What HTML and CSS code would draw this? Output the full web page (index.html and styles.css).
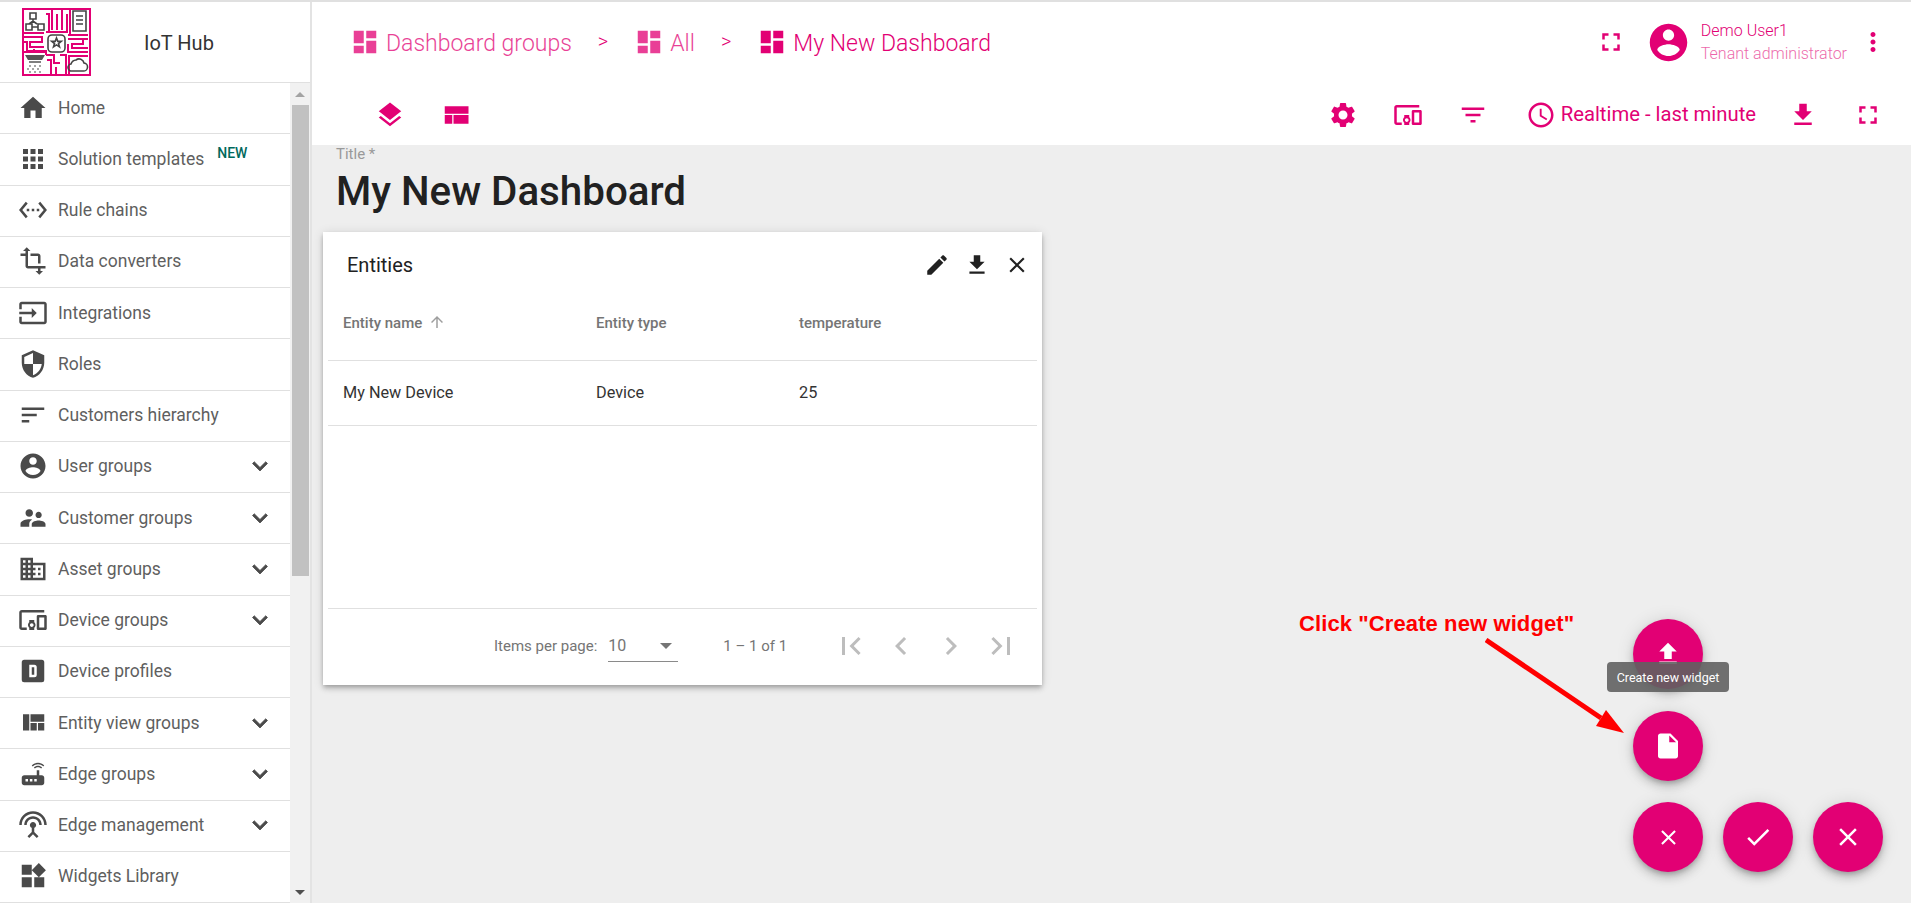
FILE: index.html
```html
<!DOCTYPE html>
<html lang="en">
<head>
    <meta charset="UTF-8">
    <title>My New Dashboard</title>
    <link rel="stylesheet" href="styles.css">
</head>
<body>
    <svg class="sprite" xmlns="http://www.w3.org/2000/svg">
        <symbol id="i-home" viewBox="0 0 24 24"><path d="M10 20v-6h4v6h5v-8h3L12 3 2 12h3v8z"/></symbol>
        <symbol id="i-apps" viewBox="0 0 24 24"><path d="M4 8h4V4H4v4zm6 12h4v-4h-4v4zm-6 0h4v-4H4v4zm0-6h4v-4H4v4zm6 0h4v-4h-4v4zm6-10v4h4V4h-4zm-6 4h4V4h-4v4zm6 6h4v-4h-4v4zm0 6h4v-4h-4v4z"/></symbol>
        <symbol id="i-ethernet" viewBox="0 0 24 24"><path d="M7.77 6.76L6.23 5.48.82 12l5.41 6.52 1.54-1.28L3.42 12l4.35-5.24zM7 13h2v-2H7v2zm10-2h-2v2h2v-2zm-6 2h2v-2h-2v2zm6.77-7.52l-1.54 1.28L20.58 12l-4.35 5.24 1.54 1.28L23.18 12l-5.41-6.52z"/></symbol>
        <symbol id="i-transform" viewBox="0 0 24 24"><path d="M22 18v-2H8V4h2L7 1 4 4h2v2H2v2h4v8c0 1.1.9 2 2 2h8v2h-2l3 3 3-3h-2v-2h4zM10 8h6v6h2V8c0-1.1-.9-2-2-2h-6v2z"/></symbol>
        <symbol id="i-input" viewBox="0 0 24 24"><path d="M21 3.01H3c-1.1 0-2 .9-2 2V9h2V4.99h18v14.03H3V15H1v4.01c0 1.1.9 1.98 2 1.98h18c1.1 0 2-.88 2-1.98v-14c0-1.11-.9-2-2-2zM11 16l4-4-4-4v3H1v2h10v3z"/></symbol>
        <symbol id="i-security" viewBox="0 0 24 24"><path d="M12 1L3 5v6c0 5.55 3.84 10.74 9 12 5.16-1.26 9-6.45 9-12V5l-9-4zm0 10.99h7c-.53 4.12-3.28 7.79-7 8.94V12H5V6.3l7-3.11v8.8z"/></symbol>
        <symbol id="i-sort" viewBox="0 0 24 24"><path d="M3 18h6v-2H3v2zM3 6v2h18V6H3zm0 7h12v-2H3v2z"/></symbol>
        <symbol id="i-account" viewBox="0 0 24 24"><path d="M12 2C6.48 2 2 6.48 2 12s4.48 10 10 10 10-4.48 10-10S17.52 2 12 2zm0 3c1.66 0 3 1.34 3 3s-1.34 3-3 3-3-1.34-3-3 1.34-3 3-3zm0 14.2c-2.5 0-4.71-1.28-6-3.22.03-1.99 4-3.08 6-3.08 1.99 0 5.97 1.09 6 3.08-1.29 1.94-3.5 3.22-6 3.22z"/></symbol>
        <symbol id="i-supervisor" viewBox="0 0 24 24"><path d="M16.5 12c1.38 0 2.49-1.12 2.49-2.5S17.88 7 16.5 7C15.12 7 14 8.12 14 9.5s1.12 2.5 2.5 2.5zM9 11c1.66 0 2.99-1.34 2.99-3S10.66 5 9 5C7.34 5 6 6.34 6 8s1.34 3 3 3zm7.5 3c-1.83 0-5.5.92-5.5 2.75V19h11v-2.25c0-1.83-3.67-2.75-5.5-2.75zM9 13c-2.33 0-7 1.17-7 3.5V19h7v-2.25c0-.85.33-2.34 2.37-3.47C10.5 13.1 9.66 13 9 13z"/></symbol>
        <symbol id="i-domain" viewBox="0 0 24 24"><path d="M12 7V3H2v18h20V7H12zM6 19H4v-2h2v2zm0-4H4v-2h2v2zm0-4H4V9h2v2zm0-4H4V5h2v2zm4 12H8v-2h2v2zm0-4H8v-2h2v2zm0-4H8V9h2v2zm0-4H8V5h2v2zm10 12h-8v-2h2v-2h-2v-2h2v-2h-2V9h8v10zm-2-8h-2v2h2v-2zm0 4h-2v2h2v-2z"/></symbol>
        <symbol id="i-devices" viewBox="0 0 24 24"><path d="M3 6h18V4H3c-1.1 0-2 .9-2 2v12c0 1.1.9 2 2 2h4v-2H3V6zm10 6H9v1.78c-.61.55-1 1.33-1 2.22s.39 1.67 1 2.22V20h4v-1.78c.61-.55 1-1.34 1-2.22s-.39-1.67-1-2.22V12zm-2 5.5c-.83 0-1.5-.67-1.5-1.5s.67-1.5 1.5-1.5 1.5.67 1.5 1.5-.67 1.5-1.5 1.5zM22 8h-6c-.5 0-1 .5-1 1v10c0 .5.5 1 1 1h6c.5 0 1-.5 1-1V9c0-.5-.5-1-1-1zm-1 10h-4v-8h4v8z"/></symbol>
        <symbol id="i-dbox" viewBox="0 0 24 24"><path fill-rule="evenodd" d="M5 3h14a2 2 0 012 2v14a2 2 0 01-2 2H5a2 2 0 01-2-2V5a2 2 0 012-2zm4 4v10h4a2 2 0 002-2V9a2 2 0 00-2-2H9zm2 2h2v6h-2V9z"/></symbol>
        <symbol id="i-quilt" viewBox="0 0 24 24"><path d="M10 18h5v-6h-5v6zm-6 0h5V5H4v13zm12 0h5v-6h-5v6zM10 5v6h11V5H10z"/></symbol>
        <symbol id="i-router" viewBox="0 0 24 24"><path d="M20.2 5.9l.8-.8C19.6 3.7 17.8 3 16 3s-3.6.7-5 2.1l.8.8C13 4.8 14.5 4.2 16 4.2s3 .6 4.2 1.7zm-.9.8c-.9-.9-2.1-1.4-3.3-1.4s-2.4.5-3.3 1.4l.8.8c.7-.7 1.6-1 2.5-1 .9 0 1.8.3 2.5 1l.8-.8zM19 13h-2V9h-2v4H5c-1.1 0-2 .9-2 2v4c0 1.1.9 2 2 2h14c1.1 0 2-.9 2-2v-4c0-1.1-.9-2-2-2zM8 18H6v-2h2v2zm3.5 0h-2v-2h2v2zm3.5 0h-2v-2h2v2z"/></symbol>
        <symbol id="i-antenna" viewBox="0 0 24 24"><path d="M12 5c-3.87 0-7 3.13-7 7h2c0-2.76 2.24-5 5-5s5 2.24 5 5h2c0-3.87-3.13-7-7-7zm1 9.29c.88-.39 1.5-1.26 1.5-2.29 0-1.38-1.12-2.5-2.5-2.5S9.5 10.62 9.5 12c0 1.02.62 1.9 1.5 2.29v3.3L7.59 21 9 22.41l3-3 3 3L16.41 21 13 17.59v-3.3zM12 1C5.93 1 1 5.93 1 12h2c0-4.97 4.03-9 9-9s9 4.03 9 9h2c0-6.07-4.93-11-11-11z"/></symbol>
        <symbol id="i-widgets" viewBox="0 0 24 24"><path d="M13 13v8h8v-8h-8zM3 21h8v-8H3v8zM3 3v8h8V3H3zm13.66-1.31L11 7.34 16.66 13l5.66-5.66-5.66-5.65z"/></symbol>
        <symbol id="i-expand" viewBox="0 0 24 24"><path d="M16.59 8.59L12 13.17 7.41 8.59 6 10l6 6 6-6z"/></symbol>
        <symbol id="i-dashboard" viewBox="0 0 24 24"><path d="M3 13h8V3H3v10zm0 8h8v-6H3v6zm10 0h8V11h-8v10zm0-18v6h8V3h-8z"/></symbol>
        <symbol id="i-layers" viewBox="0 0 24 24"><path d="M11.99 18.54l-7.37-5.73L3 14.07l9 7 9-7-1.63-1.27-7.38 5.74zM12 16l7.36-5.73L21 9l-9-7-9 7 1.63 1.27L12 16z"/></symbol>
        <symbol id="i-compact" viewBox="0 0 24 24"><path d="M3 19h6v-7H3v7zm7 0h12v-7H10v7zM3 5v6h19V5H3z"/></symbol>
        <symbol id="i-fullscreen" viewBox="0 0 24 24"><path d="M7 14H5v5h5v-2H7v-3zm-2-4h2V7h3V5H5v5zm12 7h-3v2h5v-5h-2v3zM14 5v2h3v3h2V5h-5z"/></symbol>
        <symbol id="i-more" viewBox="0 0 24 24"><path d="M12 8c1.1 0 2-.9 2-2s-.9-2-2-2-2 .9-2 2 .9 2 2 2zm0 2c-1.1 0-2 .9-2 2s.9 2 2 2 2-.9 2-2-.9-2-2-2zm0 6c-1.1 0-2 .9-2 2s.9 2 2 2 2-.9 2-2-.9-2-2-2z"/></symbol>
        <symbol id="i-settings" viewBox="0 0 24 24"><path d="M19.14 12.94c.04-.3.06-.61.06-.94 0-.32-.02-.64-.07-.94l2.03-1.58c.18-.14.23-.41.12-.61l-1.92-3.32c-.12-.22-.37-.29-.59-.22l-2.39.96c-.5-.38-1.03-.7-1.62-.94l-.36-2.54c-.04-.24-.24-.41-.48-.41h-3.84c-.24 0-.43.17-.47.41l-.36 2.54c-.59.24-1.13.57-1.62.94l-2.39-.96c-.22-.08-.47 0-.59.22L2.74 8.87c-.12.21-.08.47.12.61l2.03 1.58c-.05.3-.09.63-.09.94s.02.64.07.94l-2.03 1.58c-.18.14-.23.41-.12.61l1.92 3.32c.12.22.37.29.59.22l2.39-.96c.5.38 1.03.7 1.62.94l.36 2.54c.05.24.24.41.48.41h3.84c.24 0 .44-.17.47-.41l.36-2.54c.59-.24 1.13-.56 1.62-.94l2.39.96c.22.08.47 0 .59-.22l1.92-3.32c.12-.22.07-.47-.12-.61l-2.01-1.58zM12 15.6c-1.98 0-3.6-1.62-3.6-3.6s1.62-3.6 3.6-3.6 3.6 1.62 3.6 3.6-1.62 3.6-3.6 3.6z"/></symbol>
        <symbol id="i-filter" viewBox="0 0 24 24"><path d="M10 18h4v-2h-4v2zM3 6v2h18V6H3zm3 7h12v-2H6v2z"/></symbol>
        <symbol id="i-schedule" viewBox="0 0 24 24"><path d="M11.99 2C6.47 2 2 6.48 2 12s4.47 10 9.99 10C17.52 22 22 17.52 22 12S17.52 2 11.99 2zM12 20c-4.42 0-8-3.58-8-8s3.58-8 8-8 8 3.58 8 8-3.58 8-8 8zm.5-13H11v6l5.25 3.15.75-1.23-4.5-2.67z"/></symbol>
        <symbol id="i-download" viewBox="0 0 24 24"><path d="M19 9h-4V3H9v6H5l7 7 7-7zM5 18v2h14v-2H5z"/></symbol>
        <symbol id="i-upload" viewBox="0 0 24 24"><path d="M9 16h6v-6h4l-7-7-7 7h4v6zm-4 2h14v2H5z"/></symbol>
        <symbol id="i-edit" viewBox="0 0 24 24"><path d="M3 17.25V21h3.75L17.81 9.94l-3.75-3.75L3 17.25zM20.71 7.04c.39-.39.39-1.02 0-1.41l-2.34-2.34c-.39-.39-1.02-.39-1.41 0l-1.83 1.83 3.75 3.75 1.83-1.83z"/></symbol>
        <symbol id="i-close" viewBox="0 0 24 24"><path d="M19 6.41L17.59 5 12 10.59 6.41 5 5 6.41 10.59 12 5 17.59 6.41 19 12 13.41 17.59 19 19 17.59 13.41 12z"/></symbol>
        <symbol id="i-arrow-up" viewBox="0 0 24 24"><path d="M4 12l1.41 1.41L11 7.83V20h2V7.83l5.58 5.59L20 12l-8-8-8 8z"/></symbol>
        <symbol id="i-first" viewBox="0 0 24 24"><path d="M18.41 16.59L13.82 12l4.59-4.59L17 6l-6 6 6 6zM6 6h2v12H6z"/></symbol>
        <symbol id="i-prev" viewBox="0 0 24 24"><path d="M15.41 7.41L14 6l-6 6 6 6 1.41-1.41L10.83 12z"/></symbol>
        <symbol id="i-next" viewBox="0 0 24 24"><path d="M10 6L8.59 7.41 13.17 12l-4.58 4.59L10 18l6-6z"/></symbol>
        <symbol id="i-last" viewBox="0 0 24 24"><path d="M5.59 7.41L10.18 12l-4.59 4.59L7 18l6-6-6-6zM16 6h2v12h-2z"/></symbol>
        <symbol id="i-file" viewBox="0 0 24 24"><path d="M6 2c-1.1 0-1.99.9-1.99 2L4 20c0 1.1.89 2 1.99 2H18c1.1 0 2-.9 2-2V8l-6-6H6zm7 7V3.5L18.5 9H13z"/></symbol>
        <symbol id="i-check" viewBox="0 0 24 24"><path d="M9 16.17L4.83 12l-1.42 1.41L9 19 21 7l-1.41-1.41z"/></symbol>
    </svg>

    <div class="app">
        <aside class="sidenav">
            <div class="brand">
                <svg class="logo" viewBox="0 0 69 68">
                    <rect width="69" height="68" fill="#fff"/>
                    <rect x="1" y="1" width="67" height="66" fill="none" stroke="#e20074" stroke-width="2"/>
                    <g fill="none" stroke="#e20074" stroke-width="2">
                        <path d="M24 6h3v18M30 2v20M35 6v16M40 2v20M45 6v18M48 2v24M24 24h22"/>
                        <path d="M2 25h20M2 29h18v5H8v5h14M2 34h3v9h20M12 43v-2"/>
                        <path d="M46 27h20M46 31h15v5H50v4h16M46 36v8h20M62 31h4"/>
                        <path d="M2 44h22M24 47h8v8h6M25 52h4v14M34 59v8M38 47h6v20M24 44v3"/>
                        <path d="M46 48h20M47 48v18"/>
                    </g>
                    <g fill="none" stroke="#444" stroke-width="1.600">
                        <path d="M8 5h6v6H8zM4 16h6v6H4zM16 16h6v6h-6zM11 11v2M7 16l4-3 4 3M10 19h6"/>
                        <path d="M51 3h13v20H51zM54 8h7M54 12h7M54 16h7"/>
                        <rect x="26" y="27" width="17" height="17" rx="4"/>
                        <path d="M34.500 30l1.300 3.400h3.400l-2.700 2.100 1 3.400-3-2-3 2 1-3.400-2.700-2.100h3.400z"/>
                        <path d="M50 63h11a4 4 0 001-8 5 5 0 00-8-3 6 6 0 00-5 4 3.500 3.500 0 001 7z"/>
                    </g>
                    <path d="M3 47h20l-3 5H6z" fill="#555"/>
                    <path d="M7 54h12" stroke="#555" stroke-width="1.500"/>
                    <path d="M7 58h2M12 58h2M17 58h2M5 61h2M10 61h2M15 61h2M7 64h2M12 64h2M17 64h2" stroke="#888" stroke-width="1.500"/>
                </svg>
                <span class="brand-name">IoT Hub</span>
            </div>
            <div class="menu-wrap">
                <nav class="menu">
                    <a class="menu-row"><svg class="menu-icon"><use href="#i-home"/></svg><span class="menu-label">Home</span></a>
                    <a class="menu-row"><svg class="menu-icon"><use href="#i-apps"/></svg><span class="menu-label">Solution templates</span><span class="new-tag">NEW</span></a>
                    <a class="menu-row"><svg class="menu-icon"><use href="#i-ethernet"/></svg><span class="menu-label">Rule chains</span></a>
                    <a class="menu-row"><svg class="menu-icon"><use href="#i-transform"/></svg><span class="menu-label">Data converters</span></a>
                    <a class="menu-row"><svg class="menu-icon"><use href="#i-input"/></svg><span class="menu-label">Integrations</span></a>
                    <a class="menu-row"><svg class="menu-icon"><use href="#i-security"/></svg><span class="menu-label">Roles</span></a>
                    <a class="menu-row"><svg class="menu-icon"><use href="#i-sort"/></svg><span class="menu-label">Customers hierarchy</span></a>
                    <a class="menu-row"><svg class="menu-icon"><use href="#i-account"/></svg><span class="menu-label">User groups</span><svg class="menu-chevron"><use href="#i-expand"/></svg></a>
                    <a class="menu-row"><svg class="menu-icon"><use href="#i-supervisor"/></svg><span class="menu-label">Customer groups</span><svg class="menu-chevron"><use href="#i-expand"/></svg></a>
                    <a class="menu-row"><svg class="menu-icon"><use href="#i-domain"/></svg><span class="menu-label">Asset groups</span><svg class="menu-chevron"><use href="#i-expand"/></svg></a>
                    <a class="menu-row"><svg class="menu-icon"><use href="#i-devices"/></svg><span class="menu-label">Device groups</span><svg class="menu-chevron"><use href="#i-expand"/></svg></a>
                    <a class="menu-row"><svg class="menu-icon"><use href="#i-dbox"/></svg><span class="menu-label">Device profiles</span></a>
                    <a class="menu-row"><svg class="menu-icon"><use href="#i-quilt"/></svg><span class="menu-label">Entity view groups</span><svg class="menu-chevron"><use href="#i-expand"/></svg></a>
                    <a class="menu-row"><svg class="menu-icon"><use href="#i-router"/></svg><span class="menu-label">Edge groups</span><svg class="menu-chevron"><use href="#i-expand"/></svg></a>
                    <a class="menu-row"><svg class="menu-icon"><use href="#i-antenna"/></svg><span class="menu-label">Edge management</span><svg class="menu-chevron"><use href="#i-expand"/></svg></a>
                    <a class="menu-row"><svg class="menu-icon"><use href="#i-widgets"/></svg><span class="menu-label">Widgets Library</span></a>
                </nav>
                <div class="scrollbar">
                    <div class="scroll-btn"><span class="tri-up"></span></div>
                    <div class="scroll-thumb"></div>
                    <div class="scroll-rest"></div>
                    <div class="scroll-btn"><span class="tri-down"></span></div>
                </div>
            </div>
        </aside>

        <main class="main">
            <header class="toolbar">
                <div class="top-row">
                    <div class="crumb crumb-dim"><svg class="icon"><use href="#i-dashboard"/></svg><span class="crumb-text">Dashboard groups</span></div>
                    <span class="crumb-sep">&gt;</span>
                    <div class="crumb crumb-dim"><svg class="icon"><use href="#i-dashboard"/></svg><span class="crumb-text">All</span></div>
                    <span class="crumb-sep">&gt;</span>
                    <div class="crumb"><svg class="icon"><use href="#i-dashboard"/></svg><span class="crumb-text">My New Dashboard</span></div>
                    <div class="spacer"></div>
                    <svg class="icon"><use href="#i-fullscreen"/></svg>
                    <svg class="avatar"><use href="#i-account"/></svg>
                    <div class="user">
                        <div class="user-name">Demo User1</div>
                        <div class="user-role">Tenant administrator</div>
                    </div>
                    <svg class="icon more"><use href="#i-more"/></svg>
                </div>
                <div class="action-row">
                    <svg class="icon layers"><use href="#i-layers"/></svg>
                    <svg class="icon layouts"><use href="#i-compact"/></svg>
                    <div class="spacer"></div>
                    <div class="actions">
                        <svg class="icon"><use href="#i-settings"/></svg>
                        <svg class="icon"><use href="#i-devices"/></svg>
                        <svg class="icon"><use href="#i-filter"/></svg>
                        <div class="timewindow"><svg class="icon"><use href="#i-schedule"/></svg><span class="time-text">Realtime - last minute</span></div>
                        <svg class="icon"><use href="#i-download"/></svg>
                        <svg class="icon"><use href="#i-fullscreen"/></svg>
                    </div>
                </div>
            </header>

            <section class="canvas">
                <div class="title-box">
                    <div class="title-label">Title *</div>
                    <div class="title-value">My New Dashboard</div>
                </div>

                <div class="widget">
                    <div class="widget-head">
                        <span class="widget-title">Entities</span>
                        <svg class="widget-btn"><use href="#i-edit"/></svg>
                        <svg class="widget-btn"><use href="#i-download"/></svg>
                        <svg class="widget-btn"><use href="#i-close"/></svg>
                    </div>
                    <div class="table-row table-head">
                        <div>Entity name<svg class="sort-arrow"><use href="#i-arrow-up"/></svg></div>
                        <div>Entity type</div>
                        <div>temperature</div>
                    </div>
                    <div class="table-row table-body">
                        <div>My New Device</div>
                        <div>Device</div>
                        <div>25</div>
                    </div>
                    <div class="table-fill"></div>
                    <div class="pager">
                        <span>Items per page:</span>
                        <div class="page-select"><span>10</span><span class="tri-down tri-select"></span></div>
                        <span class="page-range">1 – 1 of 1</span>
                        <div class="page-btns">
                            <svg class="page-btn"><use href="#i-first"/></svg>
                            <svg class="page-btn"><use href="#i-prev"/></svg>
                            <svg class="page-btn"><use href="#i-next"/></svg>
                            <svg class="page-btn"><use href="#i-last"/></svg>
                        </div>
                    </div>
                </div>

                <div class="note">Click "Create new widget"</div>
                <svg class="note-arrow" viewBox="0 0 160 110">
                    <line x1="1" y1="2" x2="116" y2="80" stroke="#ff0000" stroke-width="5"/>
                    <polygon points="139,95 121,72 111,88" fill="#ff0000"/>
                </svg>

                <div class="fabs">
                    <button class="fab fab-a"><svg><use href="#i-upload"/></svg></button>
                    <button class="fab fab-b"><svg><use href="#i-file"/></svg></button>
                    <button class="fab"><svg class="small"><use href="#i-close"/></svg></button>
                    <button class="fab"><svg><use href="#i-check"/></svg></button>
                    <button class="fab"><svg><use href="#i-close"/></svg></button>
                    <div class="tooltip">Create new widget</div>
                </div>
            </section>
        </main>
    </div>
</body>
</html>
```

FILE: styles.css
```css
* {
    box-sizing: border-box;
}

html, body {
    height: 100%;
}

body {
    margin: 0;
    background-color: #eeeeee;
    font-family: Roboto, "Liberation Sans", sans-serif;
    overflow: hidden;
}

.sprite {
    display: none;
}

.app {
    display: flex;
    height: 903px;
    border-top: 2px solid #e0e0e0;
}

/* sidebar */
.sidenav {
    width: 312px;
    flex: none;
    display: flex;
    flex-direction: column;
    background-color: #fff;
    border-right: 2px solid #e3e3e3;
}

.brand {
    height: 81px;
    flex: none;
    display: flex;
    align-items: center;
    padding: 0 0 0 22px;
    border-bottom: 1px solid #e0e0e0;
}

.logo {
    width: 69px;
    height: 68px;
}

.brand-name {
    margin-left: 53px;
    padding-top: 2px;
    font-size: 20px;
    color: #333;
}

.menu-wrap {
    flex: 1;
    display: flex;
    min-height: 0;
}

.menu {
    width: 290px;
    flex: none;
}

.menu-row {
    display: flex;
    align-items: center;
    height: 51.25px;
    padding: 0 0 1px 18px;
    border-bottom: 1px solid #e0e0e0;
    color: #5f5f5f;
}

.menu-icon {
    width: 30px;
    height: 30px;
    flex: none;
    fill: #4a4a4a;
}

.menu-label {
    margin-left: 10px;
    font-size: 17.5px;
    white-space: nowrap;
}

.menu-chevron {
    width: 30px;
    height: 30px;
    margin-left: auto;
    margin-right: 15px;
    fill: #4a4a4a;
    stroke: #4a4a4a;
    stroke-width: 0.6;
}

.new-tag {
    align-self: flex-start;
    margin: 11px 0 0 13px;
    font-size: 14px;
    font-weight: 500;
    color: #00695c;
}

.scrollbar {
    width: 20px;
    display: flex;
    flex-direction: column;
    background-color: #f1f1f1;
}

.scroll-btn {
    height: 22px;
    flex: none;
    display: flex;
    align-items: center;
    justify-content: center;
}

.scroll-thumb {
    height: 471px;
    margin: 0 1px 0 2px;
    background-color: #c1c1c1;
}

.scroll-rest {
    flex: 1;
}

.tri-up, .tri-down {
    width: 0;
    height: 0;
    border-left: 5px solid transparent;
    border-right: 5px solid transparent;
}

.tri-up {
    border-bottom: 5px solid #a3a3a3;
}

.tri-down {
    border-top: 5px solid #505050;
}

/* toolbar */
.main {
    flex: 1;
    min-width: 0;
    display: flex;
    flex-direction: column;
}

.toolbar {
    height: 143px;
    flex: none;
    background-color: #fff;
    color: #e20074;
    fill: #e20074;
}

.icon {
    width: 30px;
    height: 30px;
    flex: none;
}

.spacer {
    flex: 1;
}

.top-row {
    height: 80px;
    display: flex;
    align-items: center;
    padding: 0 23px 0 38px;
    font-size: 23px;
    font-weight: 300;
}

.crumb {
    display: flex;
    align-items: center;
    gap: 6px;
}

.crumb-text {
    padding-top: 2px;
}

.crumb-dim {
    opacity: 0.75;
}

.crumb-sep {
    margin: 0 26px;
    padding-bottom: 2px;
    font-size: 20px;
}

.avatar {
    width: 45px;
    height: 45px;
    margin-left: 20px;
    flex: none;
}

.user {
    margin-left: 10px;
    font-size: 16px;
    font-weight: 300;
    line-height: 23px;
}

.user-role {
    opacity: 0.6;
}

.more {
    margin-left: 11px;
}

.action-row {
    height: 63px;
    display: flex;
    align-items: center;
    padding: 2px 28px 0 63px;
}

.layouts {
    margin-left: 36px;
}

.actions {
    display: flex;
    align-items: center;
    gap: 35px;
}

.timewindow {
    display: flex;
    align-items: center;
    gap: 5px;
    font-size: 20.25px;
    margin-left: 3px;
    margin-right: -3px;
}

.time-text {
    padding-bottom: 2px;
}

/* dashboard */
.canvas {
    flex: 1;
    position: relative;
    padding-top: 1px;
    background-color: #eeeeee;
}

.title-box {
    padding-left: 24px;
}

.title-label {
    font-size: 15px;
    line-height: 16px;
    color: #999;
}

.title-value {
    margin-top: 7px;
    font-size: 40.3px;
    font-weight: 500;
    line-height: 46px;
    color: #212121;
}

.widget {
    width: 719px;
    height: 453px;
    margin: 17px 0 0 11px;
    display: flex;
    flex-direction: column;
    padding: 0 5px;
    background-color: #fff;
    box-shadow: 0 2px 4px -1px rgba(0, 0, 0, 0.2), 0 4px 5px 0 rgba(0, 0, 0, 0.14), 0 1px 10px 0 rgba(0, 0, 0, 0.12);
}

.widget-head {
    height: 54px;
    padding: 12px 7px 0 19px;
    display: flex;
    align-items: center;
    gap: 14px;
    flex: none;
}

.widget-title {
    font-size: 20px;
    color: #212121;
    margin-right: auto;
}

.widget-btn {
    width: 26px;
    height: 26px;
    fill: #212121;
}

.table-row {
    display: grid;
    grid-template-columns: 253px 203px 1fr;
    align-items: center;
    padding-left: 15px;
    border-bottom: 1px solid #e0e0e0;
    flex: none;
}

.table-head {
    height: 75px;
    padding-bottom: 1px;
    font-size: 15px;
    font-weight: 500;
    color: #757575;
}

.table-body {
    height: 65px;
    padding-bottom: 2px;
    font-size: 16.25px;
    color: #333;
}

.sort-arrow {
    width: 18px;
    height: 18px;
    margin-left: 6px;
    vertical-align: -3px;
    fill: #9e9e9e;
}

.table-fill {
    flex: 1;
    border-bottom: 1px solid #e0e0e0;
}

.pager {
    height: 74px;
    flex: none;
    display: flex;
    align-items: center;
    padding-left: 166px;
    font-size: 15px;
    color: #757575;
    margin-bottom: 2px;
}

.page-select {
    width: 70px;
    height: 29px;
    margin: 2px 0 0 11px;
    padding: 0 6px 2px 0;
    display: flex;
    align-items: center;
    justify-content: space-between;
    border-bottom: 1px solid #8a8a8a;
    font-size: 16px;
}

.tri-select {
    border-top-color: #757575;
    border-left-width: 6px;
    border-right-width: 6px;
    border-top-width: 6px;
}

.page-range {
    margin-left: 45px;
}

.page-btns {
    display: flex;
    gap: 14px;
    margin-left: 46px;
}

.page-btn {
    width: 36px;
    height: 36px;
    fill: #bdbdbd;
}

/* annotation and floating buttons */
.note {
    position: absolute;
    left: 987px;
    top: 466px;
    font-family: "Liberation Sans", Arial, sans-serif;
    font-size: 22px;
    font-weight: 700;
    letter-spacing: 0.1px;
    color: #ff0000;
    white-space: nowrap;
}

.note-arrow {
    position: absolute;
    left: 1173px;
    top: 493px;
    width: 160px;
    height: 110px;
}

.fabs {
    position: absolute;
    right: 28px;
    bottom: 31px;
    display: grid;
    grid-template-columns: repeat(3, 70px);
    column-gap: 20px;
    row-gap: 21.5px;
}

.fab {
    width: 70px;
    height: 70px;
    padding: 0;
    border: none;
    border-radius: 50%;
    display: flex;
    align-items: center;
    justify-content: center;
    background-color: #e20074;
    fill: #fff;
    box-shadow: 0 3px 5px -1px rgba(0, 0, 0, 0.2), 0 6px 10px 0 rgba(0, 0, 0, 0.14), 0 1px 18px 0 rgba(0, 0, 0, 0.12);
}

.fab svg {
    width: 30px;
    height: 30px;
}

.fab svg.small {
    width: 25px;
    height: 25px;
}

.fab-a, .fab-b {
    grid-column: 1 / span 3;
}

.tooltip {
    position: absolute;
    left: -26px;
    top: 43px;
    width: 122px;
    height: 30px;
    display: flex;
    align-items: center;
    justify-content: center;
    border-radius: 4px;
    background-color: rgba(97, 97, 97, 0.9);
    color: #fff;
    font-size: 12.5px;
}
```
